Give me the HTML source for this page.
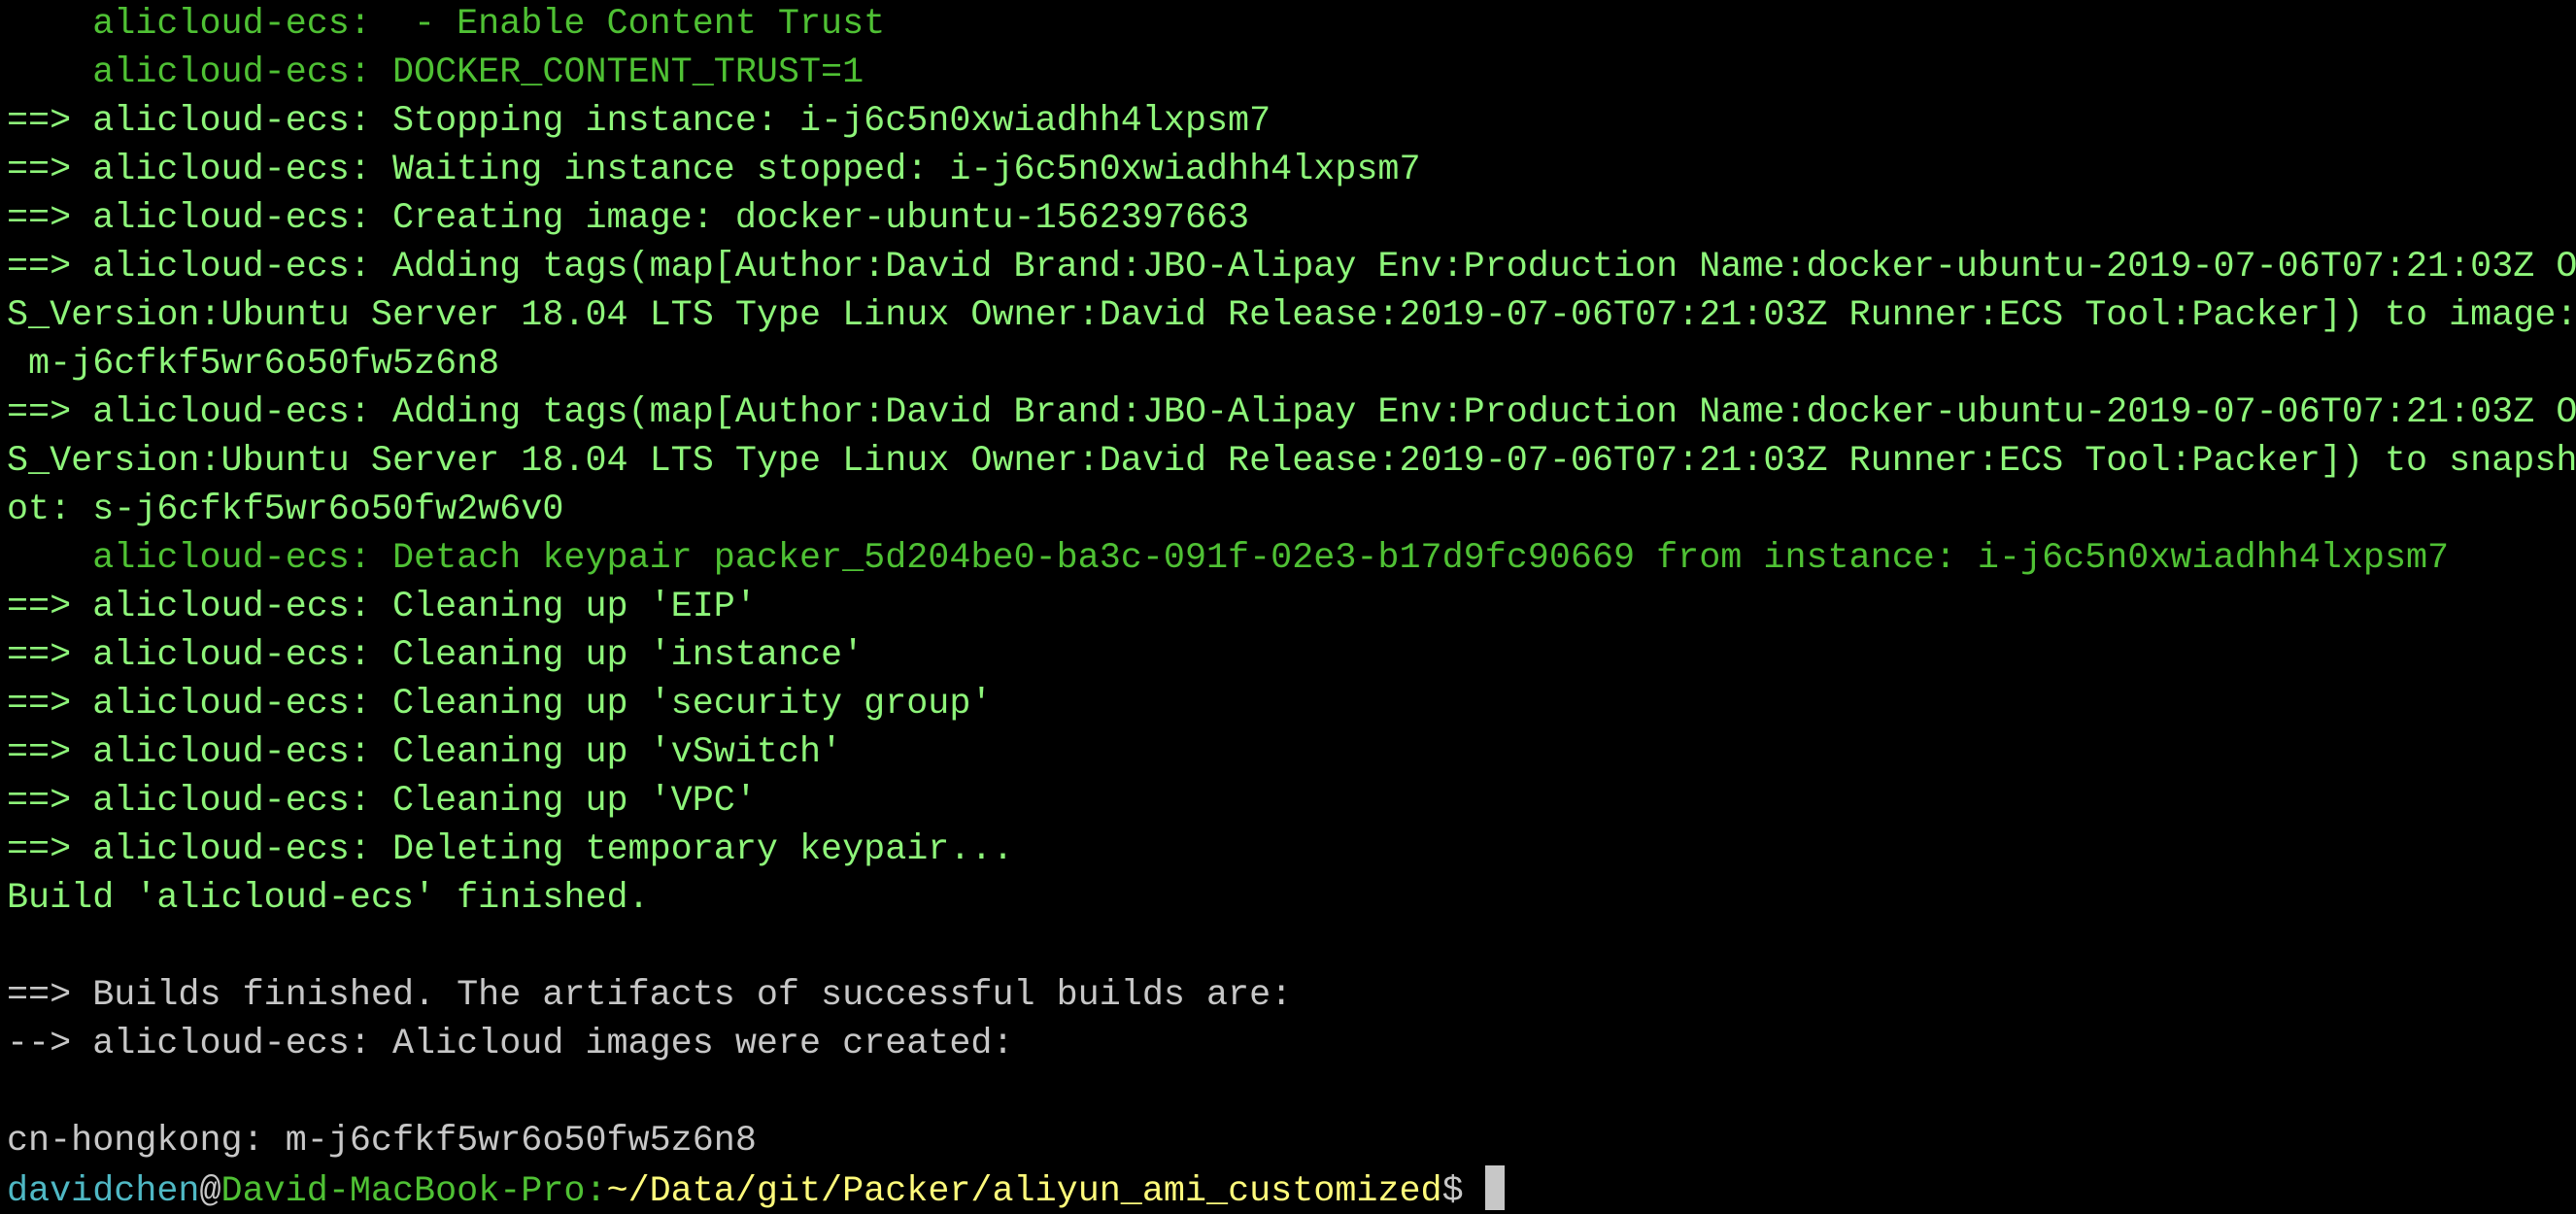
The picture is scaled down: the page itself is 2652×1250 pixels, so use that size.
<!DOCTYPE html>
<html><head><meta charset="utf-8"><style>
html,body{margin:0;padding:0;background:#000;width:2652px;height:1250px;overflow:hidden}
pre{margin:0;padding:0 0 0 7px;font-family:"Liberation Mono",monospace;font-size:36.75px;line-height:50px;color:#c7c7c7;white-space:pre}
.b{color:#8ef57a}.d{color:#4fc134}.c{color:#4fb8c4}.y{color:#fffb7b}
.cur{display:inline-block;width:20px;height:46px;background:#c7c7c7;vertical-align:-10px}
</style></head><body><pre><span class="d">    alicloud-ecs:  - Enable Content Trust</span>
<span class="d">    alicloud-ecs: DOCKER_CONTENT_TRUST=1</span>
<span class="b">==&gt; alicloud-ecs: Stopping instance: i-j6c5n0xwiadhh4lxpsm7</span>
<span class="b">==&gt; alicloud-ecs: Waiting instance stopped: i-j6c5n0xwiadhh4lxpsm7</span>
<span class="b">==&gt; alicloud-ecs: Creating image: docker-ubuntu-1562397663</span>
<span class="b">==&gt; alicloud-ecs: Adding tags(map[Author:David Brand:JBO-Alipay Env:Production Name:docker-ubuntu-2019-07-06T07:21:03Z O</span>
<span class="b">S_Version:Ubuntu Server 18.04 LTS Type Linux Owner:David Release:2019-07-06T07:21:03Z Runner:ECS Tool:Packer]) to image:</span>
<span class="b"> m-j6cfkf5wr6o50fw5z6n8</span>
<span class="b">==&gt; alicloud-ecs: Adding tags(map[Author:David Brand:JBO-Alipay Env:Production Name:docker-ubuntu-2019-07-06T07:21:03Z O</span>
<span class="b">S_Version:Ubuntu Server 18.04 LTS Type Linux Owner:David Release:2019-07-06T07:21:03Z Runner:ECS Tool:Packer]) to snapsh</span>
<span class="b">ot: s-j6cfkf5wr6o50fw2w6v0</span>
<span class="d">    alicloud-ecs: Detach keypair packer_5d204be0-ba3c-091f-02e3-b17d9fc90669 from instance: i-j6c5n0xwiadhh4lxpsm7</span>
<span class="b">==&gt; alicloud-ecs: Cleaning up 'EIP'</span>
<span class="b">==&gt; alicloud-ecs: Cleaning up 'instance'</span>
<span class="b">==&gt; alicloud-ecs: Cleaning up 'security group'</span>
<span class="b">==&gt; alicloud-ecs: Cleaning up 'vSwitch'</span>
<span class="b">==&gt; alicloud-ecs: Cleaning up 'VPC'</span>
<span class="b">==&gt; alicloud-ecs: Deleting temporary keypair...</span>
<span class="b">Build 'alicloud-ecs' finished.</span>

==&gt; Builds finished. The artifacts of successful builds are:
--&gt; alicloud-ecs: Alicloud images were created:

cn-hongkong: m-j6cfkf5wr6o50fw5z6n8
<span class="c">davidchen</span>@<span class="d">David-MacBook-Pro:</span><span class="y">~/Data/git/Packer/aliyun_ami_customized</span>$ <span class="cur"></span></pre></body></html>
